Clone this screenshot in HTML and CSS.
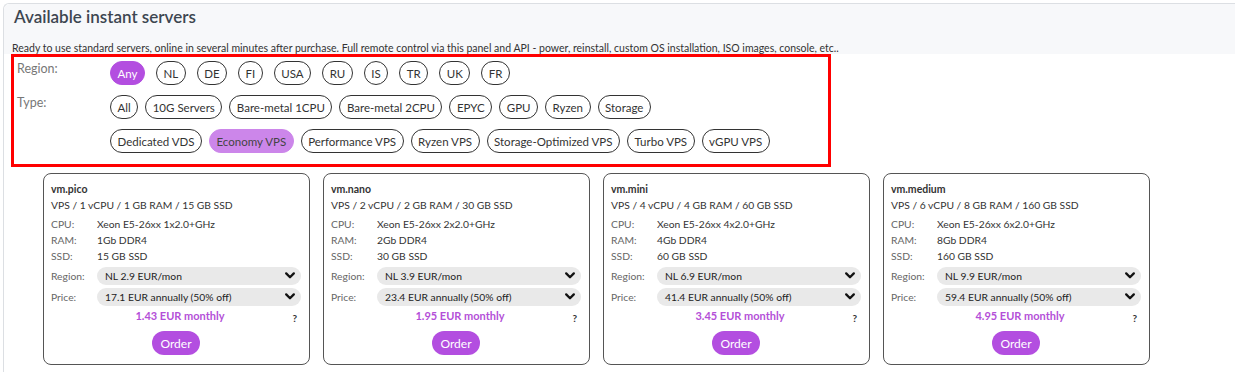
FILE: index.html
```html
<!DOCTYPE html>
<html lang="en">
  <head>
    <meta charset="UTF-8" />
    <meta name="viewport" content="width=device-width, initial-scale=1.0" />
    <title>Available instant servers</title>
    <link rel="stylesheet" href="styles.css">
  </head>
  <body>
    <div class="panel">
      <div class="panel-head">
        <h2>Available instant servers</h2>
        <p class="lead">Ready to use standard servers, online in several minutes after purchase. Full remote control via this panel and API - power, reinstall, custom OS installation, ISO images, console, etc..</p>
      </div>

      <div class="filters">
        <div class="filter-row">
          <span class="filter-label">Region:</span>
          <div class="pills pills-region">
            <span class="pill pill-active">Any</span>
            <span class="pill">NL</span>
            <span class="pill">DE</span>
            <span class="pill">FI</span>
            <span class="pill">USA</span>
            <span class="pill">RU</span>
            <span class="pill">IS</span>
            <span class="pill">TR</span>
            <span class="pill">UK</span>
            <span class="pill">FR</span>
          </div>
        </div>
        <div class="filter-row">
          <span class="filter-label">Type:</span>
          <div class="pill-lines">
            <div class="pills pills-type">
              <span class="pill">All</span>
              <span class="pill">10G Servers</span>
              <span class="pill">Bare-metal 1CPU</span>
              <span class="pill">Bare-metal 2CPU</span>
              <span class="pill">EPYC</span>
              <span class="pill">GPU</span>
              <span class="pill">Ryzen</span>
              <span class="pill">Storage</span>
            </div>
            <div class="pills pills-type">
              <span class="pill">Dedicated VDS</span>
              <span class="pill pill-soft">Economy VPS</span>
              <span class="pill">Performance VPS</span>
              <span class="pill">Ryzen VPS</span>
              <span class="pill">Storage-Optimized VPS</span>
              <span class="pill">Turbo VPS</span>
              <span class="pill">vGPU VPS</span>
            </div>
          </div>
        </div>
      </div>

      <div class="cards" id="cards"></div>
    </div>

    <script>
      const plans = [
        { name: "vm.pico", cpu: 1, ram: 1, ssd: 15, region: "2.9", annual: "17.1", monthly: "1.43" },
        { name: "vm.nano", cpu: 2, ram: 2, ssd: 30, region: "3.9", annual: "23.4", monthly: "1.95" },
        { name: "vm.mini", cpu: 4, ram: 4, ssd: 60, region: "6.9", annual: "41.4", monthly: "3.45" },
        { name: "vm.medium", cpu: 6, ram: 8, ssd: 160, region: "9.9", annual: "59.4", monthly: "4.95" },
      ]

      const chevron = `<svg class="chevron" width="10" height="7" viewBox="0 0 10 7"><path d="M1.2 1.4 L5 5.2 L8.8 1.4" fill="none" stroke="#111" stroke-width="2.3" stroke-linecap="round" stroke-linejoin="round"/></svg>`

      const container = document.getElementById("cards")
      plans.forEach((plan) => {
        const card = document.createElement("div")
        card.className = "card"
        card.innerHTML = `
          <div class="card-title">${plan.name}</div>
          <div class="card-sub">VPS / ${plan.cpu} vCPU / ${plan.ram} GB RAM / ${plan.ssd} GB SSD</div>
          <div class="spec"><span class="spec-label">CPU:</span><span>Xeon E5-26xx ${plan.cpu}x2.0+GHz</span></div>
          <div class="spec"><span class="spec-label">RAM:</span><span>${plan.ram}Gb DDR4</span></div>
          <div class="spec"><span class="spec-label">SSD:</span><span>${plan.ssd} GB SSD</span></div>
          <div class="choice"><span class="spec-label">Region:</span><div class="select"><span>NL ${plan.region} EUR/mon</span>${chevron}</div></div>
          <div class="choice"><span class="spec-label">Price:</span><div class="select"><span>${plan.annual} EUR annually (50% off)</span>${chevron}</div></div>
          <div class="monthly"><span></span><span class="monthly-price">${plan.monthly} EUR monthly</span><span class="help">?</span></div>
          <div class="order-wrap"><button class="order">Order</button></div>
        `
        container.appendChild(card)
      })
    </script>
  </body>
</html>
```

FILE: styles.css
```css
body {
  font-family: Lato, "Open Sans", Arial, sans-serif;
  margin: 0;
  background-color: #fff;
  color: #333;
}
.panel {
  margin: 3px 0 0 3px;
  border-top: 1px solid #dcdfe3;
  border-left: 1px solid #dcdfe3;
  border-top-left-radius: 6px;
  min-height: 368px;
}
.panel-head {
  background-color: #f7f8fa;
  padding: 1px 0 0 8px;
  height: 49px;
  border-top-left-radius: 6px;
}
.panel-head h2 {
  margin: 0 0 0 2px;
  font-size: 17px;
  font-weight: 600;
  color: #3d4650;
  line-height: 23px;
}
.lead {
  margin: 13px 0 0 0;
  font-size: 10.5px;
  line-height: 14px;
  color: #333;
  white-space: nowrap;
}
.filters {
  margin: 0 0 0 7px;
  width: 820px;
  height: 113px;
  border: 3px solid #ff0000;
  background-color: #fff;
  padding: 4px 0 0 3px;
  box-sizing: border-box;
}
.filter-row {
  display: flex;
  align-items: flex-start;
}
.filter-label {
  width: 93px;
  font-size: 12.5px;
  color: #777;
  line-height: 16px;
}
.pill-lines {
  display: flex;
  flex-direction: column;
  gap: 10px;
}
.pills {
  display: flex;
}
.pills-region {
  gap: 11px;
  margin-bottom: 10px;
}
.pills-type {
  gap: 7px;
}
.pill {
  display: inline-flex;
  align-items: center;
  height: 22px;
  padding: 0 6.5px;
  border: 1px solid #333;
  border-radius: 12px;
  font-size: 11.5px;
  color: #333;
  white-space: nowrap;
}
.pill-active {
  background-color: #b34ee0;
  border-color: #b34ee0;
  color: #fff;
}
.pill-soft {
  background-color: #cc86ea;
  border-color: #cc86ea;
  color: #444;
}
.cards {
  display: flex;
  gap: 13px;
  padding: 6px 0 0 39px;
}
.card {
  width: 250px;
  height: 176px;
  border: 1px solid #555;
  border-radius: 8px;
  padding: 7px 8px 7px 7px;
  font-size: 10.3px;
  line-height: 16px;
  color: #333;
}
.card-title {
  font-weight: 700;
  font-size: 10.5px;
  line-height: 16px;
}
.card-sub {
  margin-bottom: 3px;
}
.spec {
  display: flex;
}
.spec-label {
  width: 46px;
  flex-shrink: 0;
  color: #666;
}
.choice {
  display: flex;
  align-items: center;
  margin-top: 2px;
  height: 19px;
}
.select {
  flex: 1;
  display: flex;
  align-items: center;
  justify-content: space-between;
  height: 18px;
  padding: 0 6px 0 8px;
  background-color: #e9e9e9;
  border-radius: 9px;
  color: #222;
}
.monthly {
  display: grid;
  grid-template-columns: 1fr auto 1fr;
  margin-top: 2px;
  padding-left: 8px;
}
.monthly-price {
  color: #b44fd8;
  font-weight: 700;
  font-size: 11px;
}
.help {
  justify-self: end;
  font-weight: 700;
  font-size: 10px;
  padding-top: 2px;
  padding-right: 4px;
}
.order-wrap {
  display: flex;
  justify-content: center;
  margin-top: 5px;
}
.order {
  background-color: #b34ee0;
  color: white;
  border: none;
  border-radius: 12px;
  height: 24px;
  padding: 0 8px;
  font-family: inherit;
  font-size: 12px;
  cursor: pointer;
}
```
